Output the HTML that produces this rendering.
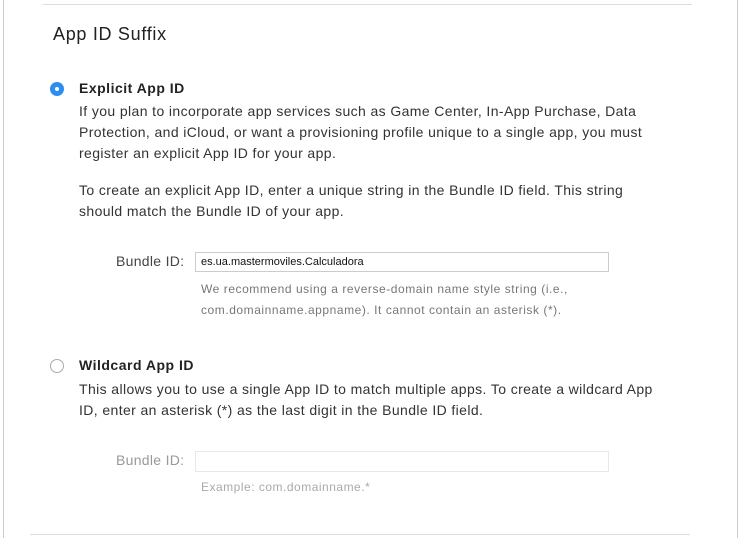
<!DOCTYPE html>
<html><head><style>
body{margin:0;width:742px;height:538px;background:#fff;font-family:"Liberation Sans",sans-serif;color:#333;position:relative;overflow:hidden}
.a{position:absolute;white-space:nowrap}
.p{font-size:14px;line-height:21px;color:#333;letter-spacing:0.39px}
.h{font-size:12px;line-height:21px;color:#777;letter-spacing:0.55px}
.radio{position:absolute;width:14px;height:14px;border-radius:50%;box-sizing:border-box}
</style></head><body>
<div class="a" style="left:3px;top:0;width:1px;height:538px;background:#ccc"></div>
<div class="a" style="left:737px;top:0;width:1px;height:538px;background:#ccc"></div>
<div class="a" style="left:43px;top:4px;width:649px;height:1px;background:#ddd"></div>
<div class="a" style="left:30px;top:534px;width:660px;height:1px;background:#ddd"></div>
<div class="a" style="left:53px;top:24px;font-size:18px;color:#222;letter-spacing:0.7px">App ID Suffix</div>

<div class="radio" style="left:50px;top:82px;background:#2b8ef0"><div style="position:absolute;left:5px;top:5px;width:4px;height:4px;border-radius:50%;background:#fff"></div></div>
<div class="a" style="left:79px;top:80px;font-size:14px;font-weight:bold;color:#222;letter-spacing:0.5px">Explicit App ID</div>
<div class="a p" style="left:79px;top:101px">If you plan to incorporate app services such as Game Center, In-App Purchase, Data<br>Protection, and iCloud, or want a provisioning profile unique to a single app, you must<br>register an explicit App ID for your app.</div>
<div class="a p" style="left:79px;top:180px">To create an explicit App ID, enter a unique string in the Bundle ID field. This string<br>should match the Bundle ID of your app.</div>
<div class="a" style="left:116px;top:253px;font-size:14px;color:#444;letter-spacing:0.3px">Bundle ID:</div>
<div class="a" style="left:195px;top:252px;width:414px;height:20px;border:1px solid #ccc;box-sizing:border-box;font-size:11px;line-height:18px;padding-left:5px;color:#111">es.ua.mastermoviles.Calculadora</div>
<div class="a h" style="left:201px;top:279px">We recommend using a reverse-domain name style string (i.e.,<br>com.domainname.appname). It cannot contain an asterisk (*).</div>

<div class="radio" style="left:50px;top:359px;border:1px solid #aaa;background:#fff"></div>
<div class="a" style="left:79px;top:357px;font-size:14px;font-weight:bold;color:#222;letter-spacing:0.5px">Wildcard App ID</div>
<div class="a p" style="left:79px;top:379px">This allows you to use a single App ID to match multiple apps. To create a wildcard App<br>ID, enter an asterisk (*) as the last digit in the Bundle ID field.</div>
<div class="a" style="left:116px;top:452px;font-size:14px;color:#999;letter-spacing:0.3px">Bundle ID:</div>
<div class="a" style="left:195px;top:451px;width:414px;height:21px;border:1px solid #e8e8e8;box-sizing:border-box"></div>
<div class="a" style="left:201px;top:480px;font-size:12px;color:#aaa;letter-spacing:0.5px">Example: com.domainname.*</div>
</body></html>
